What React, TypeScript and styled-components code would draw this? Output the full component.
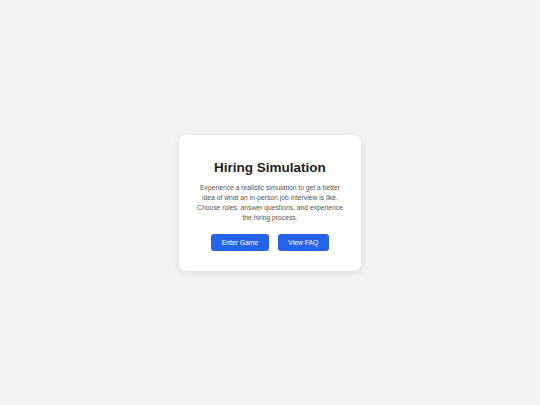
import React from 'react'
import styled, { createGlobalStyle } from 'styled-components'

const GlobalStyle = createGlobalStyle`
    html, body {
        margin: 0;
        padding: 0;
        height: 100%;
        background: #f4f4f4;
        font-family: "Liberation Sans", Arial, sans-serif;
    }
    #root {
        height: 100%;
    }
`

const Page = styled.div`
    display: flex;
    align-items: center;
    justify-content: center;
    height: 100%;
`

const Card = styled.div`
    width: 182px;
    box-sizing: border-box;
    padding: 23px 16px 20px;
    background: #ffffff;
    border-radius: 7px;
    box-shadow: 0 2px 8px rgba(0, 0, 0, 0.1);
    text-align: center;
`

const Title = styled.h1`
    margin: 0 0 5px;
    font-size: 13.5px;
    line-height: 20px;
    font-weight: 700;
    color: #222222;
`

const Description = styled.p`
    margin: 0 0 11px;
    font-size: 6.75px;
    line-height: 10px;
    color: #555555;
`

const Actions = styled.div`
    display: flex;
    justify-content: center;
    gap: 9px;
`

const Button = styled.button`
    height: 17px;
    padding: 0 10.5px;
    border: none;
    border-radius: 3px;
    background: #2563eb;
    color: #ffffff;
    font-family: inherit;
    font-size: 6.75px;
    cursor: pointer;
`

const App: React.FC = () => {
    return (
        <>
            <GlobalStyle />
            <Page>
                <Card>
                    <Title>Hiring Simulation</Title>
                    <Description>
                        Experience a realistic simulation to get a better idea of what an in-person job
                        interview is like. Choose roles, answer questions, and experience the hiring process.
                    </Description>
                    <Actions>
                        <Button>Enter Game</Button>
                        <Button>View FAQ</Button>
                    </Actions>
                </Card>
            </Page>
        </>
    )
}

export default App
